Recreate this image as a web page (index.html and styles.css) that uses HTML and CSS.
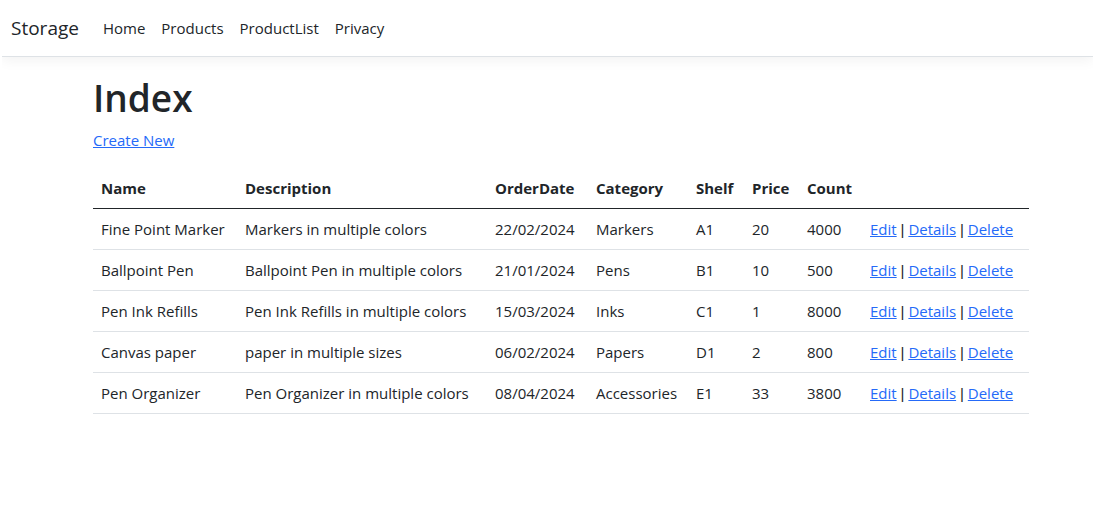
FILE: index.html
```html
<!DOCTYPE html>
<html lang="en">
<head>
  <meta charset="utf-8">
  <meta name="viewport" content="width=device-width, initial-scale=1.0">
  <title>Index - Storage</title>
  <link rel="stylesheet" href="styles.css">
</head>
<body>

<header>
  <nav class="navbar">
    <a class="navbar-brand" href="#">Storage</a>
    <ul class="navbar-nav">
      <li><a class="nav-link" href="#">Home</a></li>
      <li><a class="nav-link" href="#">Products</a></li>
      <li><a class="nav-link" href="#">ProductList</a></li>
      <li><a class="nav-link" href="#">Privacy</a></li>
    </ul>
  </nav>
</header>

<div class="container">
  <main>
    <h1>Index</h1>
    <p><a href="#">Create New</a></p>

    <table class="table">
      <colgroup>
        <col class="col-name">
        <col class="col-description">
        <col class="col-date">
        <col class="col-category">
        <col class="col-shelf">
        <col class="col-price">
        <col class="col-count">
        <col>
      </colgroup>
      <thead>
        <tr>
          <th>Name</th>
          <th>Description</th>
          <th>OrderDate</th>
          <th>Category</th>
          <th>Shelf</th>
          <th>Price</th>
          <th>Count</th>
          <th></th>
        </tr>
      </thead>
      <tbody>
        <tr>
          <td>Fine Point Marker</td>
          <td>Markers in multiple colors</td>
          <td>22/02/2024</td>
          <td>Markers</td>
          <td>A1</td>
          <td>20</td>
          <td>4000</td>
          <td><a href="#">Edit</a> <span class="sep">|</span> <a href="#">Details</a> <span class="sep">|</span> <a href="#">Delete</a></td>
        </tr>
        <tr>
          <td>Ballpoint Pen</td>
          <td>Ballpoint Pen in multiple colors</td>
          <td>21/01/2024</td>
          <td>Pens</td>
          <td>B1</td>
          <td>10</td>
          <td>500</td>
          <td><a href="#">Edit</a> <span class="sep">|</span> <a href="#">Details</a> <span class="sep">|</span> <a href="#">Delete</a></td>
        </tr>
        <tr>
          <td>Pen Ink Refills</td>
          <td>Pen Ink Refills in multiple colors</td>
          <td>15/03/2024</td>
          <td>Inks</td>
          <td>C1</td>
          <td>1</td>
          <td>8000</td>
          <td><a href="#">Edit</a> <span class="sep">|</span> <a href="#">Details</a> <span class="sep">|</span> <a href="#">Delete</a></td>
        </tr>
        <tr>
          <td>Canvas paper</td>
          <td>paper in multiple sizes</td>
          <td>06/02/2024</td>
          <td>Papers</td>
          <td>D1</td>
          <td>2</td>
          <td>800</td>
          <td><a href="#">Edit</a> <span class="sep">|</span> <a href="#">Details</a> <span class="sep">|</span> <a href="#">Delete</a></td>
        </tr>
        <tr>
          <td>Pen Organizer</td>
          <td>Pen Organizer in multiple colors</td>
          <td>08/04/2024</td>
          <td>Accessories</td>
          <td>E1</td>
          <td>33</td>
          <td>3800</td>
          <td><a href="#">Edit</a> <span class="sep">|</span> <a href="#">Details</a> <span class="sep">|</span> <a href="#">Delete</a></td>
        </tr>
      </tbody>
    </table>
  </main>
</div>

</body>
</html>
```
FILE: styles.css
```css
*,
*::before,
*::after {
  box-sizing: border-box;
}

body {
  margin: 0;
  font-family: "Segoe UI", "Open Sans", "Noto Sans", sans-serif;
  font-size: 15px;
  line-height: 24px;
  color: #212529;
  background-color: #fff;
}

a {
  color: #256af8;
}

.navbar {
  display: flex;
  align-items: center;
  min-height: 57px;
  margin: 0 2px;
  padding: 8px 9px;
  border-bottom: 1px solid #dee2e6;
  box-shadow: 0 4px 12px rgba(0, 0, 0, 0.05);
  /* keep the shadow below the bar only */
  clip-path: inset(0 0 -20px 0);
}

.navbar-brand {
  margin-right: 16px;
  font-size: 19px;
  line-height: 30px;
  color: #212529;
  text-decoration: none;
}

.navbar-nav {
  display: flex;
  margin: 0;
  padding: 0;
  list-style: none;
}

.nav-link {
  display: block;
  padding: 8px;
  color: #212529;
  text-decoration: none;
}

.container {
  max-width: 985px;
  margin: 16px auto 0;
  padding: 0 11px 0 38px;
}

h1 {
  margin: 0 0 6px;
  font-size: 37px;
  font-weight: 600;
  line-height: 49px;
}

p {
  margin: 0 0 16px;
}

.table {
  width: 100%;
  border-collapse: collapse;
  table-layout: fixed;
}

.table th,
.table td {
  padding: 8px;
  border-bottom: 1px solid #dee2e6;
  text-align: left;
  white-space: nowrap;
}

.table thead th {
  border-bottom-color: #212529;
  font-weight: 700;
}

.sep {
  font-family: "Liberation Sans", Arial, sans-serif;
  line-height: 1;
}

.col-name {
  width: 144px;
}

.col-description {
  width: 250px;
}

.col-date {
  width: 101px;
}

.col-category {
  width: 100px;
}

.col-shelf {
  width: 56px;
}

.col-price {
  width: 55px;
}

.col-count {
  width: 63px;
}
```
